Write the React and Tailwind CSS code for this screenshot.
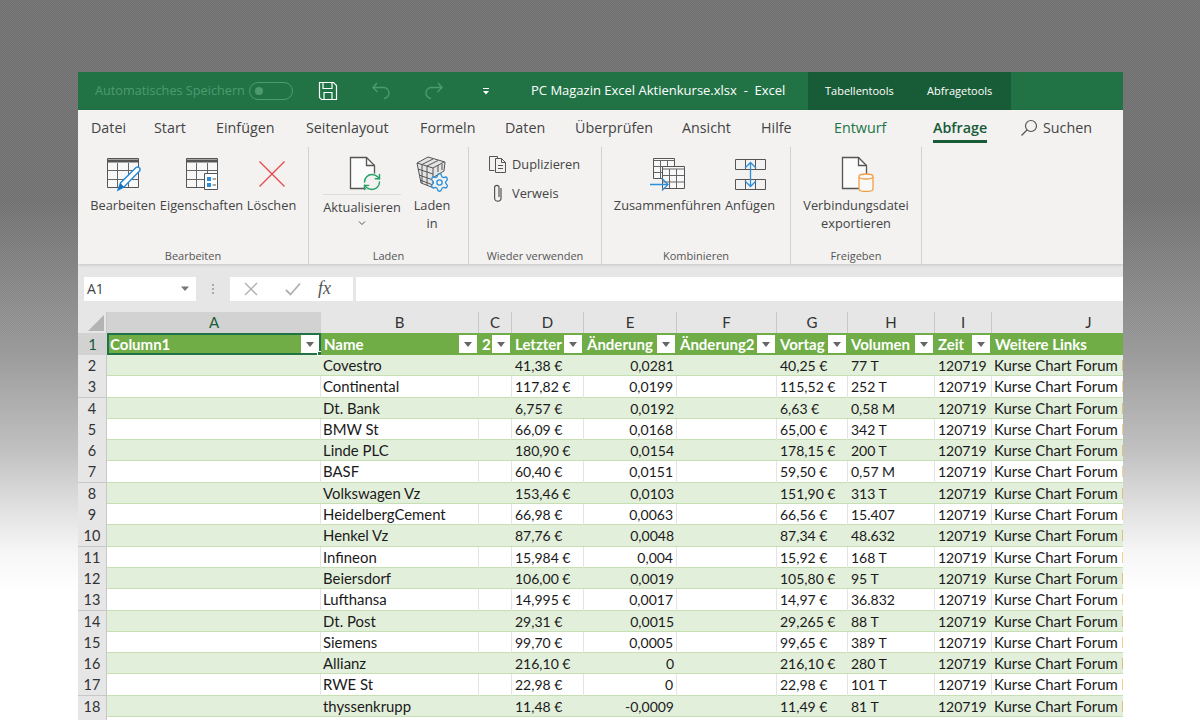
import React from 'react';
import { RefreshCw, Settings } from 'lucide-react';

const tabs = [
  { label: 'Datei', w: 'w-[63px]' },
  { label: 'Start', w: 'w-[62px]' },
  { label: 'Einfügen', w: 'w-[90px]' },
  { label: 'Seitenlayout', w: 'w-[114px]' },
  { label: 'Formeln', w: 'w-[85px]' },
  { label: 'Daten', w: 'w-[70px]' },
  { label: 'Überprüfen', w: 'w-[107px]' },
  { label: 'Ansicht', w: 'w-[79px]' },
  { label: 'Hilfe', w: 'w-[73px]' },
];

const letters = ['A', 'B', 'C', 'D', 'E', 'F', 'G', 'H', 'I', 'J'];
const headers = ['Column1', 'Name', '2', 'Letzter', 'Änderung', 'Änderung2', 'Vortag', 'Volumen', 'Zeit', 'Weitere Links'];

// name, letzter, änderung, vortag, volumen
const rows = [
  ['Covestro', '41,38 €', '0,0281', '40,25 €', '77 T'],
  ['Continental', '117,82 €', '0,0199', '115,52 €', '252 T'],
  ['Dt. Bank', '6,757 €', '0,0192', '6,63 €', '0,58 M'],
  ['BMW St', '66,09 €', '0,0168', '65,00 €', '342 T'],
  ['Linde PLC', '180,90 €', '0,0154', '178,15 €', '200 T'],
  ['BASF', '60,40 €', '0,0151', '59,50 €', '0,57 M'],
  ['Volkswagen Vz', '153,46 €', '0,0103', '151,90 €', '313 T'],
  ['HeidelbergCement', '66,98 €', '0,0063', '66,56 €', '15.407'],
  ['Henkel Vz', '87,76 €', '0,0048', '87,34 €', '48.632'],
  ['Infineon', '15,984 €', '0,004', '15,92 €', '168 T'],
  ['Beiersdorf', '106,00 €', '0,0019', '105,80 €', '95 T'],
  ['Lufthansa', '14,995 €', '0,0017', '14,97 €', '36.832'],
  ['Dt. Post', '29,31 €', '0,0015', '29,265 €', '88 T'],
  ['Siemens', '99,70 €', '0,0005', '99,65 €', '389 T'],
  ['Allianz', '216,10 €', '0', '216,10 €', '280 T'],
  ['RWE St', '22,98 €', '0', '22,98 €', '101 T'],
  ['thyssenkrupp', '11,48 €', '-0,0009', '11,49 €', '81 T'],
];

const gridCols = 'grid grid-cols-[29px_214px_158px_33px_72px_93px_100px_71px_87px_57px_194px]';

const TableIcon = ({ children }) => (
  <svg width="36" height="36" viewBox="0 0 36 36" fill="none">
    <path d="M2.500 2.500h31v29h-31z" fill="#f8f8f8" stroke="#555" />
    <path d="M2.500 5h31" stroke="#555" strokeWidth="3" />
    <path d="M2.500 14.500h31M2.500 23.500h31M12.500 7v24M23.500 7v24" stroke="#666" />
    {children}
  </svg>
);

const PencilIcon = () => (
  <TableIcon>
    <path d="M13 34l2.500-7L31 11.500a2.500 2.500 0 0 1 3.500 3.500L19 31z" fill="#fff" stroke="#1e88d8" strokeWidth="1.400" />
    <path d="M13 34l2.500-7 3.500 4z" fill="#1e6fb8" />
  </TableIcon>
);

const PropsIcon = () => (
  <TableIcon>
    <path d="M20.500 17.500h13v16h-13z" fill="#fff" stroke="#555" />
    <path d="M23 21h4v4h-4zM23 27h4v4h-4z" fill="#2b8fd9" />
    <path d="M28.500 23h3.500M28.500 29h3.500" stroke="#555" />
  </TableIcon>
);

const FileIcon = ({ children }) => (
  <svg width="36" height="36" viewBox="0 0 36 36" fill="none">
    <path d="M4.500 1.500h16l8 8v23h-24z" fill="#fbfbfb" stroke="#555" strokeWidth="1.300" />
    <path d="M20.500 1.500v8h8" stroke="#555" strokeWidth="1.300" />
    {children}
  </svg>
);

const Btn = ({ icon, w, children, className = '' }) => (
  <div className={`flex flex-col items-center shrink-0 ${w} ${className}`}>
    <div className="h-[36px] flex items-center justify-center">{icon}</div>
    <div className="mt-[4px] text-[12.800px] leading-[18px] text-[#444] text-center whitespace-nowrap">{children}</div>
  </div>
);

const Group = ({ w, title, pad, children }) => (
  <div className={`shrink-0 h-[117px] flex flex-col border-r border-[#d4d2d0] ${w}`}>
    <div className={`flex-1 flex pt-[9px] ${pad}`}>{children}</div>
    <div className="h-[17px] text-[11px] leading-[17px] text-[#555] text-center whitespace-nowrap">{title}</div>
  </div>
);

const Caret = () => (
  <svg width="10" height="6" viewBox="0 0 10 6"><path d="M1 0.500h8L5 5z" fill="#777" /></svg>
);

const Cell = ({ children, right, white, wide }) => (
  <div className={`overflow-hidden whitespace-nowrap ${wide ? 'text-[14.900px] pl-[2px]' : 'pl-[3px]'} ${right ? 'text-right pr-[3px]' : ''} ${white ? 'border-r border-[#e4e4e4]' : ''}`}>
    {children}
  </div>
);

export default function App() {
  return (
    <div className="h-[720px] overflow-hidden pt-[72px] pl-[78px] bg-[linear-gradient(to_bottom,rgba(255,255,255,0)_0px,rgba(255,255,255,0)_200px,rgba(255,255,255,0.27)_350px,rgba(255,255,255,0.55)_450px,rgba(255,255,255,0.75)_500px,rgba(255,255,255,0.93)_550px,rgba(255,255,255,1)_590px),conic-gradient(#707070_25%,#797979_0_50%,#707070_0_75%,#797979_0)] bg-[length:100%_100%,2px_2px] font-['Open_Sans',sans-serif]">
      <div className="w-[1045px] overflow-hidden bg-[#e6e6e6]">
        {/* title bar */}
        <div className="h-[38px] bg-[#217346] flex items-center text-white">
          <span className="ml-[17px] w-[154px] text-[12.700px] text-[#4e9a6f] whitespace-nowrap">Automatisches Speichern</span>
          <div className="w-[44px] h-[18px] rounded-full border border-[#4e9a6f] flex items-center pl-[5px]">
            <div className="w-[8px] h-[8px] rounded-full bg-[#4e9a6f]" />
          </div>
          <svg className="ml-[25px]" width="20" height="20" viewBox="0 0 20 20" fill="none" stroke="#fff" strokeWidth="1.200">
            <path d="M1.500 1.500h14l3 3v14h-15l-2-2z" />
            <path d="M5 1.500v6h9v-6M6 18.500v-7h8v7" />
          </svg>
          <svg className="ml-[33px]" width="20" height="20" viewBox="0 0 20 20" fill="none" stroke="#4e9a6f" strokeWidth="1.400">
            <path d="M6 2L2 6.500 6.500 11M2 6.500h10a5.500 5.500 0 0 1 1 11" />
          </svg>
          <svg className="ml-[33px]" width="20" height="20" viewBox="0 0 20 20" fill="none" stroke="#4e9a6f" strokeWidth="1.400">
            <path d="M14 2l4 4.500L13.500 11M18 6.500H8a5.500 5.500 0 0 0-1 11" />
          </svg>
          <svg className="ml-[38px]" width="8" height="7" viewBox="0 0 8 7" fill="#fff">
            <path d="M1 0h6v1H1zM1 3h6L4 6.500z" />
          </svg>
          <span className="ml-[41px] w-[277px] text-[13px] whitespace-pre">PC Magazin Excel Aktienkurse.xlsx  -  Excel</span>
          <div className="h-full w-[203px] bg-[#185c37] flex items-center text-[11px] pl-[17px] whitespace-nowrap">
            <span className="w-[102px]">Tabellentools</span>
            <span>Abfragetools</span>
          </div>
        </div>

        {/* ribbon */}
        <div className="bg-[#f3f2f1] shadow-[0_1px_3px_rgba(0,0,0,0.15)]">
          <div className="h-[37px] flex items-center pl-[13px] pb-[2px] text-[14.300px] text-[#444] whitespace-nowrap">
            {tabs.map((t) => (
              <span key={t.label} className={t.w}>{t.label}</span>
            ))}
            <span className="w-[99px] text-[#217346]">Entwurf</span>
            <span className="w-[87px] h-full flex items-center">
              <span className="h-[25px] mt-[5px] leading-[20px] font-semibold text-[#185c37] border-b-[3px] border-[#185c37]">Abfrage</span>
            </span>
            <svg width="18" height="18" viewBox="0 0 18 18" fill="none" stroke="#555" strokeWidth="1.200">
              <circle cx="11" cy="7" r="5.500" />
              <path d="M7 11l-5.500 5.500" />
            </svg>
            <span className="ml-[5px]">Suchen</span>
          </div>

          <div className="flex h-[117px]">
            <Group w="w-[231px]" title="Bearbeiten" pad="pl-[13px] gap-[5px]">
              <Btn w="w-[64px]" icon={<PencilIcon />}>Bearbeiten</Btn>
              <Btn w="w-[83px]" icon={<PropsIcon />}>Eigenschaften</Btn>
              <Btn
                w="w-[49px]"
                className="-ml-[1px]"
                icon={
                  <svg width="28" height="28" viewBox="0 0 28 28" stroke="#e8484a" strokeWidth="1.300">
                    <path d="M1.500 1.500l25 25M26.500 1.500l-25 25" />
                  </svg>
                }
              >
                Löschen
              </Btn>
            </Group>

            <Group w="w-[160px]" title="Laden" pad="pl-[14px] gap-[13px]">
              <div className="w-[78px] flex flex-col items-center">
                <div className="h-[36px] ml-[4px]">
                  <FileIcon>
                    <circle cx="26" cy="26" r="9" fill="#f3f2f1" />
                    <RefreshCw x="16" y="16" width="20" height="20" color="#21a366" strokeWidth={1.700} />
                  </FileIcon>
                </div>
                <div className="w-full mt-[2px] border-t border-[#dcdcdc] pt-[3px] text-[12.800px] leading-[18px] text-[#444] text-center whitespace-nowrap">Aktualisieren</div>
                <svg className="mt-[5px]" width="8" height="5" viewBox="0 0 8 5" fill="none" stroke="#555"><path d="M1 0.500l3 3 3-3" /></svg>
              </div>
              <Btn
                w="w-[36px]"
                icon={
                  <svg width="36" height="36" viewBox="0 0 36 36" fill="none">
                    <path d="M3 7l11-6 17 5-1 9-10 6v11L7 27z" fill="#e4e4e4" stroke="#555" />
                    <path d="M3 7l16 5 11-6M19 12v20M8 8.500L19 3M13 10l11-5.500M4 13l15 5M5 19l14 5M6 24l13 5M8 9v18M13 10v19M24 9v7M28 8v6" stroke="#555" />
                    <Settings x="15" y="16" width="21" height="21" color="#2b8fd9" fill="#f3f2f1" strokeWidth={1.500} />
                  </svg>
                }
              >
                Laden
                <br />
                in
              </Btn>
            </Group>

            <Group w="w-[133px]" title="Wieder verwenden" pad="pl-[19px] -mt-[1px]">
              <div className="flex flex-col text-[12.800px] leading-[18px] text-[#444] whitespace-nowrap">
                <div className="flex items-center gap-[5px] h-[18px]">
                  <svg width="19" height="18" viewBox="0 0 19 18" fill="none" stroke="#555">
                    <path d="M6.500 15.500h-5v-14h8v2M7.500 3.500h6l4 4v10h-10z" />
                    <path d="M13.500 3.500v4h4M10 10.500h5M10 13.500h5" />
                  </svg>
                  Duplizieren
                </div>
                <div className="flex items-center gap-[8px] h-[20px] mt-[10px] pl-[4px]">
                  <svg width="12" height="20" viewBox="0 0 12 20" fill="none" stroke="#555" strokeWidth="1.200">
                    <path d="M9 5v10a3.200 3.200 0 0 1-6.400 0V4.500a2.200 2.200 0 0 1 4.400 0V14" />
                  </svg>
                  Verweis
                </div>
              </div>
            </Group>

            <Group w="w-[189px]" title="Kombinieren" pad="pl-[12px] gap-[3px]">
              <Btn
                w="w-[107px]"
                icon={
                  <svg width="36" height="36" viewBox="0 0 36 36" fill="none">
                    <path d="M3.500 2.500h21v20h-21z" fill="#f8f8f8" stroke="#555" />
                    <path d="M3.500 4.500h21M3.500 10.500h21M3.500 16.500h21M10.500 5v17M17.500 5v17" stroke="#666" />
                    <path d="M12.500 10.500h22v22h-22z" fill="#f8f8f8" stroke="#555" />
                    <path d="M12.500 13h22M12.500 19.500h22M12.500 26h22M19.500 13v19M26.500 13v19" stroke="#666" />
                    <path d="M0 28.500h18M12 22.500l6 6-6 6" stroke="#2b8fd9" strokeWidth="1.300" />
                  </svg>
                }
              >
                Zusammenführen
              </Btn>
              <Btn
                w="w-[52px]"
                icon={
                  <svg width="34" height="34" viewBox="0 0 34 34" fill="none">
                    <path d="M2.500 2.500h30v10h-30zM2.500 22.500h30v10h-30zM12.500 2.500v10M22.500 2.500v10M12.500 22.500v10M22.500 22.500v10" stroke="#555" />
                    <path d="M17.500 6v23M12 11l5.500-5.500L23 11M12 24l5.500 5.500L23 24" stroke="#2b8fd9" strokeWidth="1.300" />
                  </svg>
                }
              >
                Anfügen
              </Btn>
            </Group>

            <Group w="w-[131px]" title="Freigeben" pad="justify-center">
              <Btn
                w="w-[105px]"
                icon={
                  <FileIcon>
                    <path d="M21 21v12a7 2.500 0 0 0 14 0V21" fill="#f8f8f8" stroke="#f0a044" strokeWidth="1.300" />
                    <ellipse cx="28" cy="20.500" rx="7" ry="2.500" fill="#f8f8f8" stroke="#f0a044" strokeWidth="1.300" />
                  </FileIcon>
                }
              >
                Verbindungsdatei
                <br />
                exportieren
              </Btn>
            </Group>
          </div>
        </div>

        {/* formula bar */}
        <div className="h-[48px] flex items-center pt-[1px] text-[#444]">
          <div className="ml-[6px] w-[112px] h-[24px] bg-white flex items-center justify-between pl-[3px] pr-[6px] text-[14px]">
            A1
            <Caret />
          </div>
          <div className="w-[34px] flex flex-col items-center gap-[2px]">
            <div className="w-[2px] h-[2px] bg-[#aaa]" />
            <div className="w-[2px] h-[2px] bg-[#aaa]" />
            <div className="w-[2px] h-[2px] bg-[#aaa]" />
          </div>
          <div className="w-[123px] h-[24px] bg-white flex items-center pl-[14px]">
            <svg width="14" height="14" viewBox="0 0 14 14" stroke="#b0b0b0" strokeWidth="1.400"><path d="M1 1l12 12M13 1L1 13" /></svg>
            <svg className="ml-[27px]" width="16" height="14" viewBox="0 0 16 14" fill="none" stroke="#b0b0b0" strokeWidth="1.800"><path d="M1 8l4.500 4.500L15 1.500" /></svg>
            <span className="ml-[17px] text-[18px] italic font-['Liberation_Serif',serif] text-[#555]">fx</span>
          </div>
          <div className="ml-[3px] flex-1 h-[24px] bg-white" />
        </div>

        {/* sheet */}
        <div className="font-['Lato',sans-serif] text-[14px] text-[#1a1a1a]">
          <div className={`${gridCols} h-[21px] text-[15px] leading-[21px] text-center text-[#333]`}>
            <div className="flex justify-end items-end pr-[2px] pb-[2px] border-r border-[#c8c8c8]">
              <div className="w-0 h-0 border-l-[16px] border-l-transparent border-b-[16px] border-b-[#b4b4b4]" />
            </div>
            {letters.map((l, i) => (
              <div key={l} className={i === 0 ? 'bg-[#d2d2d2] text-[#185c37]' : 'border-r border-[#c8c8c8]'}>{l}</div>
            ))}
          </div>

          <div className={`${gridCols} h-[22px] leading-[22px]`}>
            <div className="bg-[#d2d2d2] text-center text-[15px] text-[#185c37]">1</div>
            {headers.map((h, i) => (
              <div key={h} className="relative bg-[#70ad47] text-[15px] text-white font-bold pl-[3px] whitespace-nowrap">
                {h}
                {i < 9 && (
                  <div className="absolute right-[2px] top-[2px] w-[18px] h-[18px] bg-white flex items-center justify-center">
                    <svg width="8" height="5" viewBox="0 0 8 5"><path d="M0 0h8L4 5z" fill="#666" /></svg>
                  </div>
                )}
                {i === 0 && (
                  <div className="absolute inset-0 border-2 border-[#217346]">
                    <div className="absolute right-[-3px] bottom-[-3px] w-[5px] h-[5px] bg-[#217346] border border-white" />
                  </div>
                )}
              </div>
            ))}
          </div>

          {rows.map((r, i) => {
            const white = i % 2 === 1;
            return (
              <div
                key={r[0]}
                className={`${gridCols} h-[21.300px] leading-[21px] border-b border-[#c6e0b4] ${white ? 'bg-white' : 'bg-[#e2efda]'}`}
              >
                <div className="bg-[#e6e6e6] border-r border-b border-[#c8c8c8] text-center text-[14.500px] text-[#333]">{i + 2}</div>
                <Cell white={white} />
                <Cell white={white} wide>{r[0]}</Cell>
                <Cell white={white} />
                <Cell white={white}>{r[1]}</Cell>
                <Cell white={white} right>{r[2]}</Cell>
                <Cell white={white} />
                <Cell white={white}>{r[3]}</Cell>
                <Cell white={white}>{r[4]}</Cell>
                <Cell white={white}>120719</Cell>
                <Cell wide>Kurse Chart Forum News</Cell>
              </div>
            );
          })}
          <div className={`${gridCols} h-[21px] bg-white`}>
            <div className="bg-[#e6e6e6] border-r border-[#c8c8c8]" />
          </div>
        </div>
      </div>
    </div>
  );
}
